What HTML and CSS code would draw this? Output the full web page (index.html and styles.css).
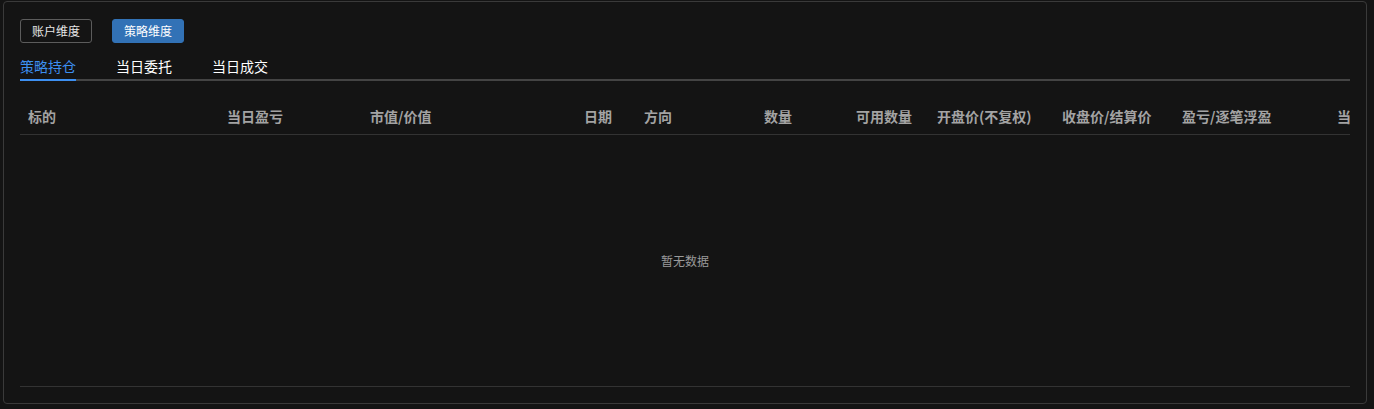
FILE: index.html
```html
<!DOCTYPE html>
<html>
<head>
    <title>策略持仓</title>
    <link rel="stylesheet" href="styles.css">
</head>
<body>
    <div class="panel">
        <div class="dims">
            <button class="dim">账户维度</button>
            <button class="dim active">策略维度</button>
        </div>

        <div class="tabs">
            <div class="tab active">策略持仓</div>
            <div class="tab">当日委托</div>
            <div class="tab">当日成交</div>
        </div>

        <div class="table">
            <div class="thead">
                <div class="th c1">标的</div>
                <div class="th c2">当日盈亏</div>
                <div class="th c3">市值/价值</div>
                <div class="th c4">日期</div>
                <div class="th c5">方向</div>
                <div class="th c6">数量</div>
                <div class="th c7">可用数量</div>
                <div class="th c8">开盘价(不复权)</div>
                <div class="th c9">收盘价/结算价</div>
                <div class="th c10">盈亏/逐笔浮盈</div>
                <div class="th c11">当日开仓均价</div>
            </div>
            <div class="empty">暂无数据</div>
        </div>
    </div>
</body>
</html>
```

FILE: styles.css
```css
body {
    margin: 0;
    background: #141414;
    font-family: "Noto Sans CJK SC", "Liberation Sans", sans-serif;
    color: #fff;
}
.panel {
    box-sizing: border-box;
    width: 1364px;
    height: 403px;
    margin: 1px 0 0 3px;
    padding: 17px 16px 16px;
    border: 1px solid #3a3a3a;
    border-radius: 4px;
    display: flex;
    flex-direction: column;
}
.dims {
    display: flex;
    gap: 20px;
}
.dim {
    box-sizing: border-box;
    width: 72px;
    height: 24px;
    padding: 0;
    border: 1px solid #5c5c5c;
    border-radius: 3px;
    background: transparent;
    color: #e6e6e6;
    font-family: inherit;
    font-size: 12px;
    line-height: 22px;
}
.dim.active {
    background: #3272b6;
    border-color: #3272b6;
    color: #fff;
}
.tabs {
    display: flex;
    gap: 40px;
    margin-top: 13px;
    border-bottom: 2px solid #444;
}
.tab {
    font-size: 14px;
    line-height: 20px;
    padding-bottom: 3px;
    margin-bottom: -2px;
    border-bottom: 2px solid transparent;
    color: #fff;
}
.tab.active {
    color: #3d8ff0;
    border-bottom-color: #3d8ff0;
}
.table {
    flex: 1;
    display: flex;
    flex-direction: column;
    margin-top: 18px;
    border-bottom: 1px solid #333;
}
.thead {
    display: flex;
    height: 35px;
    border-bottom: 1px solid #333;
    overflow: hidden;
}
.th {
    flex: none;
    box-sizing: border-box;
    padding: 0 8px;
    font-size: 14px;
    font-weight: bold;
    line-height: 34px;
    color: #a3a3a3;
    white-space: nowrap;
    overflow: hidden;
}
.c1 { width: 199px; }
.c2 { width: 143px; }
.c3 { width: 214px; }
.c4 { width: 60px; }
.c5 { width: 120px; }
.c6 { width: 92px; }
.c7 { width: 81px; }
.c8 { width: 125px; }
.c9 { width: 120px; }
.c10 { width: 155px; }
.c11 { width: 21px; padding-right: 0; }
.empty {
    flex: 1;
    display: flex;
    align-items: center;
    justify-content: center;
    font-size: 12px;
    color: #9a9a9a;
}
```
